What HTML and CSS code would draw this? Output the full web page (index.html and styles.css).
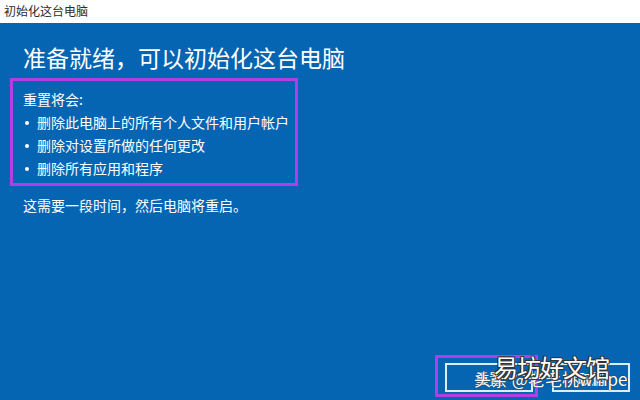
FILE: index.html
```html
<!DOCTYPE html>
<html lang="zh-CN">
<head>
<meta charset="utf-8">
<title>初始化这台电脑</title>
<link rel="stylesheet" href="styles.css">
</head>
<body>
<div class="titlebar">初始化这台电脑</div>
<main class="main">
  <h1 class="heading">准备就绪，可以初始化这台电脑</h1>
  <section class="box">
    <div class="line">重置将会:</div>
    <ul class="list">
      <li class="item">删除此电脑上的所有个人文件和用户帐户</li>
      <li class="item">删除对设置所做的任何更改</li>
      <li class="item">删除所有应用和程序</li>
    </ul>
  </section>
  <p class="note">这需要一段时间，然后电脑将重启。</p>
  <div class="actions">
    <button class="btn btn-reset">重置</button>
    <button class="btn btn-cancel">取消</button>
  </div>
  <div class="mark-box"></div>
  <div class="wm-small">头条 @老毛桃winpe</div>
  <div class="wm-big">易坊好文馆</div>
</main>
</body>
</html>
```
FILE: styles.css
```css
html, body {
  margin: 0;
  padding: 0;
  width: 640px;
  height: 400px;
  overflow: hidden;
  font-family: "Noto Sans CJK SC", "Noto Sans", sans-serif;
}
.titlebar {
  height: 23px;
  line-height: 21px;
  padding-left: 4px;
  font-size: 12px;
  color: #2b2b2b;
  background: #ffffff;
}
.main {
  position: relative;
  height: 377px;
  box-sizing: border-box;
  padding: 19px 0 0 23px;
  background: #0565b3;
  color: #ffffff;
  display: flex;
  flex-direction: column;
}
.heading {
  margin: 0;
  font-size: 23px;
  font-weight: normal;
  line-height: 30px;
  height: 30px;
}
.box {
  margin: 6px 0 0 -13px;
  width: 288px;
  box-sizing: border-box;
  border: 3px solid #b03fe6;
  padding: 7px 0 3px 10px;
  font-size: 14px;
  line-height: 23px;
}
.line {
  white-space: nowrap;
}
.list {
  list-style: none;
  margin: 0;
  padding: 0;
}
.item {
  position: relative;
  padding-left: 14px;
  white-space: nowrap;
}
.item::before {
  content: "";
  position: absolute;
  left: 2px;
  top: 10px;
  width: 4px;
  height: 4px;
  border-radius: 50%;
  background: #ffffff;
}
.note {
  margin: 8px 0 0 0;
  font-size: 14px;
  line-height: 23px;
}
.actions {
  margin-top: auto;
  display: flex;
  justify-content: flex-end;
  gap: 19px;
  padding: 0 10px 8px 0;
}
.btn {
  height: 29px;
  box-sizing: border-box;
  border: 2px solid #d8eefa;
  background: #0565b3;
  color: #ffffff;
  font-family: "Noto Sans CJK SC", sans-serif;
  font-size: 14px;
  padding: 0;
}
.btn-reset { width: 88px; }
.btn-cancel { width: 78px; }
.mark-box {
  position: absolute;
  left: 435px;
  top: 332px;
  width: 103px;
  height: 42px;
  box-sizing: border-box;
  border: 3px solid #b03fe6;
}
.wm-small {
  position: absolute;
  left: 474px;
  top: 344px;
  font-size: 17px;
  line-height: 24px;
  color: #ffffff;
  white-space: nowrap;
  text-shadow: 0 0 1px #333, 0 0 1px #333;
  font-family: "Noto Sans CJK SC", "Liberation Sans", sans-serif;
}
.wm-big {
  position: absolute;
  left: 494px;
  top: 327px;
  font-size: 24px;
  line-height: 34px;
  color: #ffffff;
  white-space: nowrap;
  letter-spacing: -1px;
  text-shadow: 1px 1px 0 #333, -1px -1px 0 #333, 1px -1px 0 #333, -1px 1px 0 #333;
}
```
